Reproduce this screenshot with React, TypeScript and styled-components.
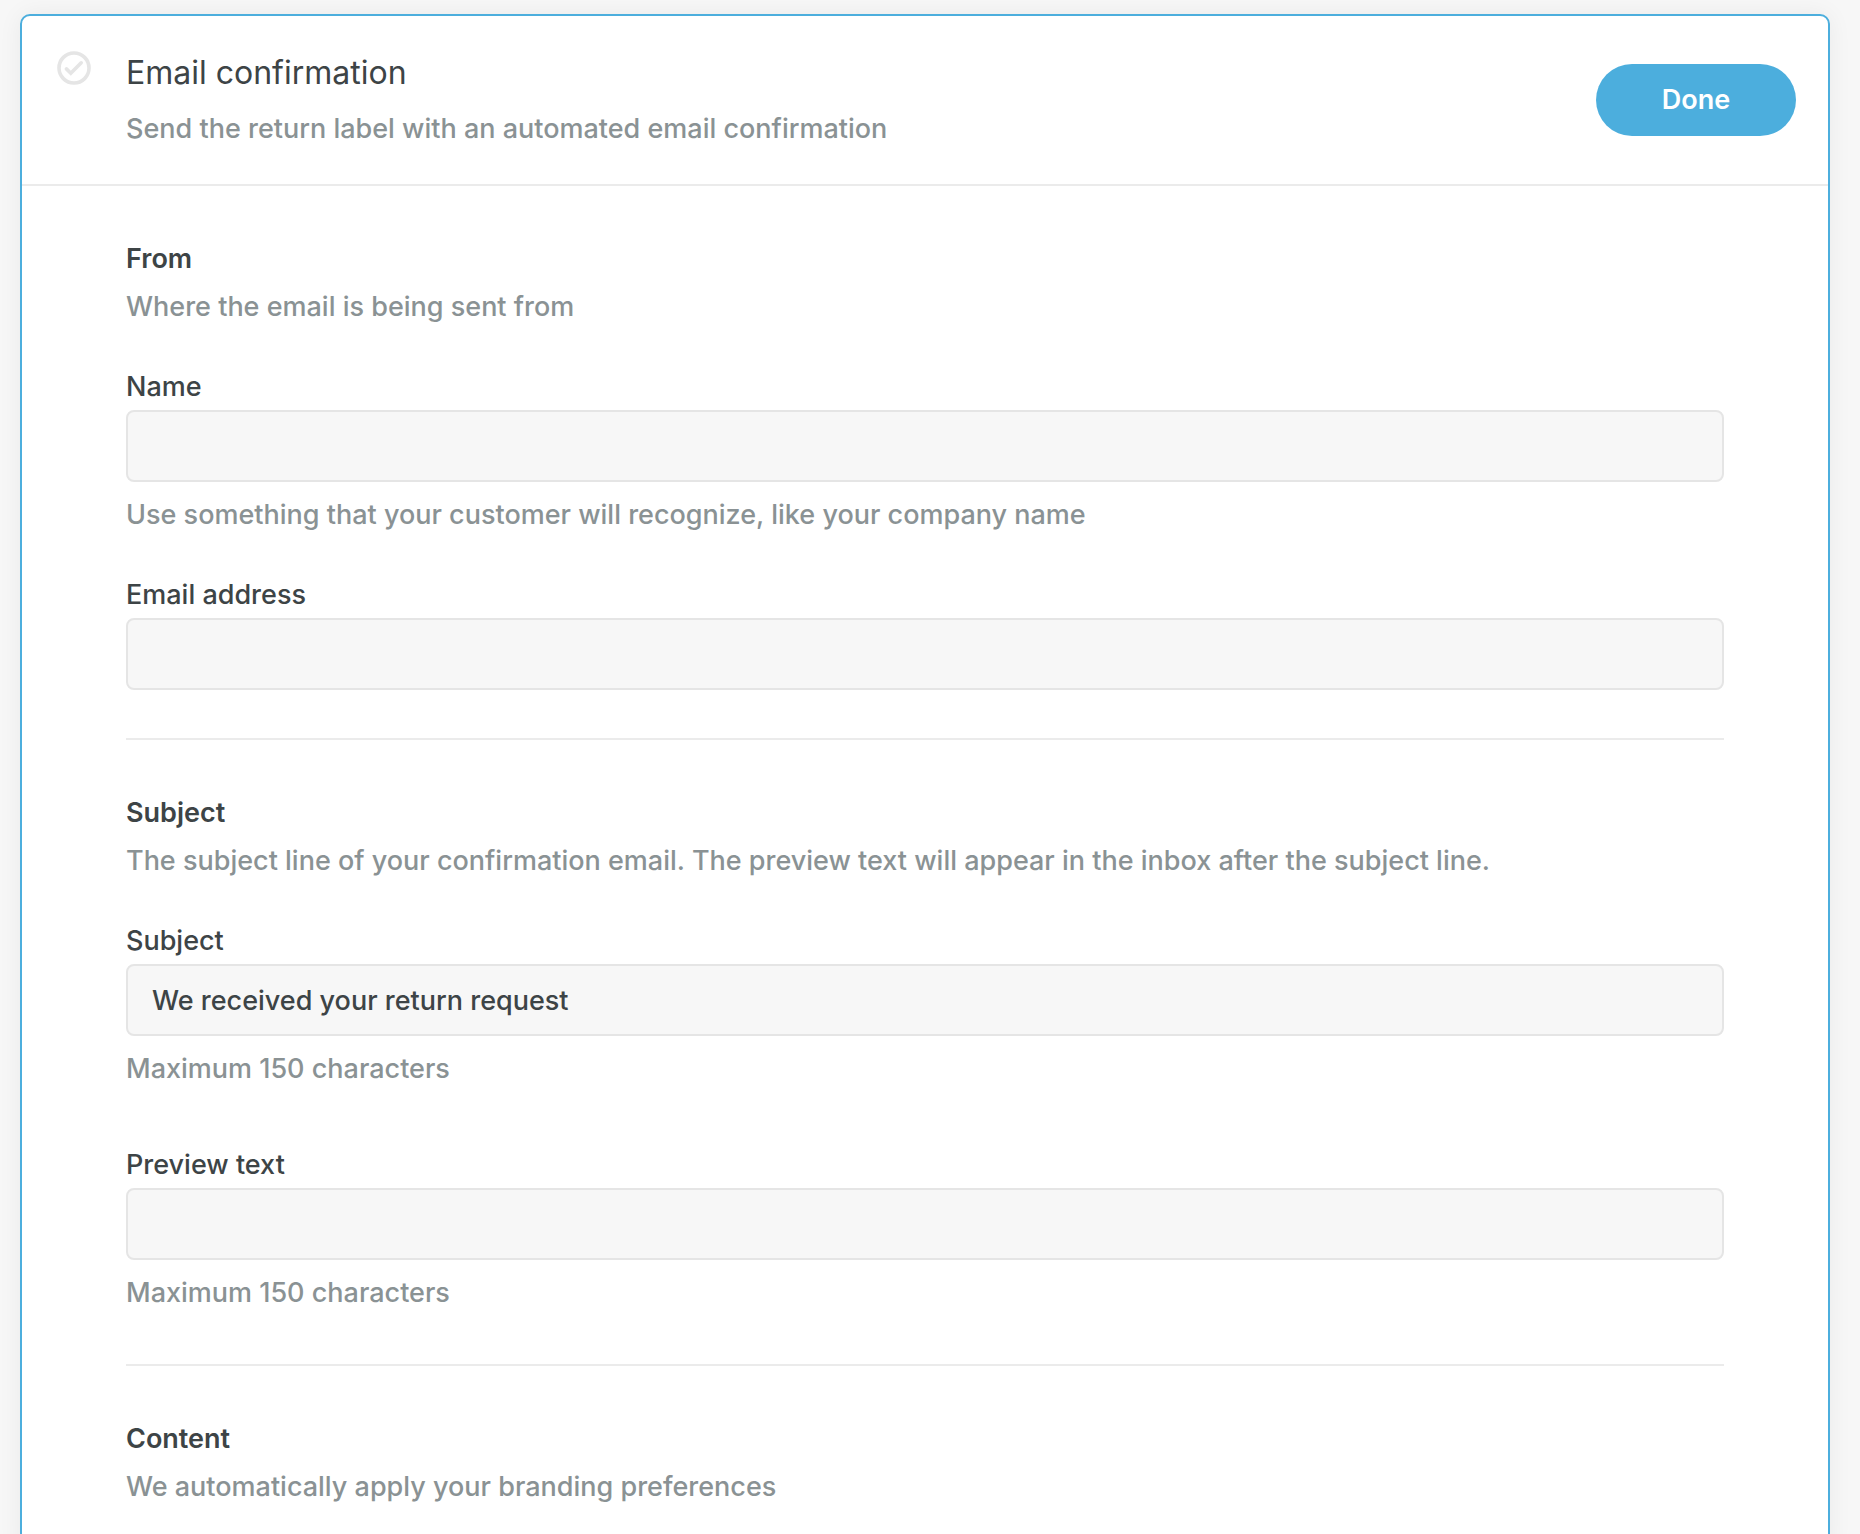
import React, { useId, useState } from "react";
import styled, { createGlobalStyle } from "styled-components";

const color = {
  page: "#f7f7f7",
  accent: "#4caedd",
  ink: "#3d4446",
  muted: "#8a9294",
  rule: "#ebebeb",
  fieldBorder: "#e5e5e5",
  field: "#f7f7f7",
};

const GlobalStyle = createGlobalStyle`
  *, *::before, *::after { box-sizing: border-box; }
  html { height: 100%; overflow: hidden; }
  body {
    margin: 0;
    background: ${color.page};
    color: ${color.ink};
    font-family: Inter, "Liberation Sans", sans-serif;
    font-size: 27px;
    font-weight: 500;
    line-height: 36px;
    -webkit-font-smoothing: antialiased;
  }
`;

const Page = styled.main`
  padding: 14px 30px 0 20px;
`;

const Card = styled.section`
  min-height: 100vh;
  background: #fff;
  border: 2px solid ${color.accent};
  border-radius: 10px;
  box-shadow: 0 0 24px rgba(0, 0, 0, 0.06);
`;

const CardHeader = styled.header`
  display: flex;
  align-items: center;
  padding: 32px 32px 32px 34px;
  border-bottom: 2px solid ${color.rule};
`;

const StatusIcon = styled.svg`
  flex: none;
  align-self: flex-start;
  width: 36px;
  height: 36px;
  margin: 2px 34px 0 0;
`;

const HeaderText = styled.div`
  flex: 1;
  display: grid;
  gap: 16px;
  padding: 3px 0 5px;
`;

const Title = styled.h1`
  margin: 0;
  font-size: 32px;
  font-weight: 400;
  line-height: 44px;
`;

const Muted = styled.p`
  margin: 0;
  color: ${color.muted};
`;

const DoneButton = styled.button`
  width: 200px;
  height: 72px;
  border: 0;
  border-radius: 36px;
  background: ${color.accent};
  color: #fff;
  font: inherit;
  font-weight: 600;
  cursor: pointer;
`;

const CardBody = styled.form`
  padding: 0 104px;
`;

const Group = styled.section<{ $bottom?: number }>`
  display: grid;
  gap: 44px;
  padding: 55px 0 ${(p) => p.$bottom ?? 48}px;

  & + & {
    border-top: 2px solid ${color.rule};
  }
`;

const GroupHeading = styled.div`
  display: grid;
  gap: 12px;
`;

const GroupTitle = styled.h2`
  margin: 0;
  font-size: 27px;
  font-weight: 600;
  line-height: 36px;
`;

const FieldList = styled.div<{ $gap: number }>`
  display: grid;
  gap: ${(p) => p.$gap}px;
`;

const FieldBox = styled.div`
  display: flex;
  flex-direction: column;
`;

const Label = styled.label`
  margin-bottom: 5px;
`;

const Input = styled.input`
  width: 100%;
  height: 72px;
  padding: 0 24px;
  border: 2px solid ${color.fieldBorder};
  border-radius: 8px;
  background: ${color.field};
  color: ${color.ink};
  font: inherit;
  outline-color: ${color.accent};
`;

const Hint = styled(Muted)`
  margin-top: 15px;
`;

type FieldProps = {
  label: string;
  hint?: string;
  type?: string;
  initial?: string;
  maxLength?: number;
};

function Field({ label, hint, type = "text", initial = "", maxLength }: FieldProps) {
  const id = useId();
  const [value, setValue] = useState(initial);
  return (
    <FieldBox>
      <Label htmlFor={id}>{label}</Label>
      <Input
        id={id}
        type={type}
        value={value}
        maxLength={maxLength}
        aria-describedby={hint ? `${id}-hint` : undefined}
        onChange={(e) => setValue(e.target.value)}
      />
      {hint && <Hint id={`${id}-hint`}>{hint}</Hint>}
    </FieldBox>
  );
}

function Heading({ title, text }: { title: string; text: string }) {
  return (
    <GroupHeading>
      <GroupTitle>{title}</GroupTitle>
      <Muted>{text}</Muted>
    </GroupHeading>
  );
}

export default function App() {
  return (
    <>
      <GlobalStyle />
      <Page>
        <Card>
          <CardHeader>
            <StatusIcon viewBox="0 0 36 36" fill="none" stroke="#e5e5e5" aria-hidden="true">
              <circle cx="18" cy="18" r="15" strokeWidth="3.6" />
              <path d="M10.4 18.9 L14.8 23.2 L25.2 12.8" strokeWidth="3.6" strokeLinecap="round" />
            </StatusIcon>
            <HeaderText>
              <Title>Email confirmation</Title>
              <Muted>Send the return label with an automated email confirmation</Muted>
            </HeaderText>
            <DoneButton type="button">Done</DoneButton>
          </CardHeader>
          <CardBody>
            <Group>
              <Heading title="From" text="Where the email is being sent from" />
              <FieldList $gap={44}>
                <Field
                  label="Name"
                  hint="Use something that your customer will recognize, like your company name"
                />
                <Field label="Email address" type="email" />
              </FieldList>
            </Group>
            <Group $bottom={53}>
              <Heading
                title="Subject"
                text="The subject line of your confirmation email. The preview text will appear in the inbox after the subject line."
              />
              <FieldList $gap={60}>
                <Field
                  label="Subject"
                  initial="We received your return request"
                  hint="Maximum 150 characters"
                  maxLength={150}
                />
                <Field label="Preview text" hint="Maximum 150 characters" maxLength={150} />
              </FieldList>
            </Group>
            <Group>
              <Heading title="Content" text="We automatically apply your branding preferences" />
            </Group>
          </CardBody>
        </Card>
      </Page>
    </>
  );
}
